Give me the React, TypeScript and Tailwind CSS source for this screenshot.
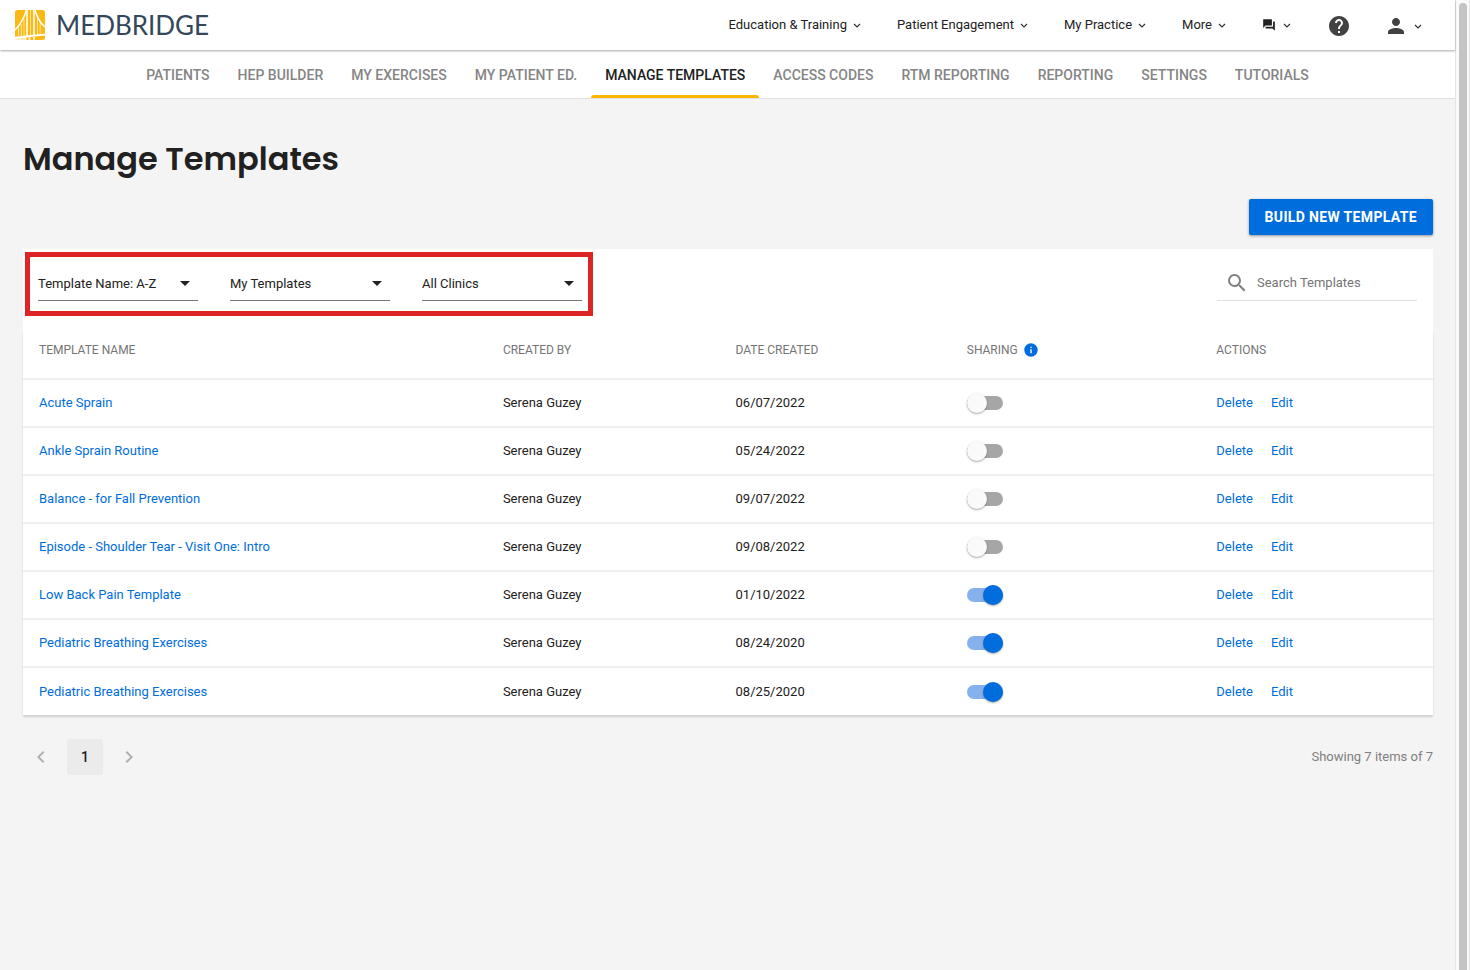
import { useState } from "react";
import {
  MdChevronLeft,
  MdChevronRight,
  MdHelp,
  MdInfo,
  MdPerson,
  MdQuestionAnswer,
  MdSearch,
} from "react-icons/md";

const TOP_LINKS = ["Education & Training", "Patient Engagement", "My Practice", "More"];

const TABS = [
  "Patients",
  "HEP Builder",
  "My Exercises",
  "My Patient Ed.",
  "Manage Templates",
  "Access Codes",
  "RTM Reporting",
  "Reporting",
  "Settings",
  "Tutorials",
];

const FILTERS = [
  { label: "Sort by", options: ["Template Name: A-Z", "Template Name: Z-A"] },
  { label: "Template owner", options: ["My Templates", "Shared Templates"] },
  { label: "Clinic", options: ["All Clinics"] },
];

const TEMPLATES = [
  { id: 1, name: "Acute Sprain", date: "06/07/2022", shared: false },
  { id: 2, name: "Ankle Sprain Routine", date: "05/24/2022", shared: false },
  { id: 3, name: "Balance - for Fall Prevention", date: "09/07/2022", shared: false },
  { id: 4, name: "Episode - Shoulder Tear - Visit One: Intro", date: "09/08/2022", shared: false },
  { id: 5, name: "Low Back Pain Template", date: "01/10/2022", shared: true },
  { id: 6, name: "Pediatric Breathing Exercises", date: "08/24/2020", shared: true },
  { id: 7, name: "Pediatric Breathing Exercises", date: "08/25/2020", shared: true },
];

function Chevron() {
  return (
    <svg viewBox="0 0 8 6" fill="none" className="w-2 h-1.5 mt-0.5">
      <path d="M1 1l3 3 3-3" stroke="#333" strokeWidth="1.2" />
    </svg>
  );
}

function Logo() {
  return (
    <a href="#" aria-label="MedBridge" className="flex items-center gap-[11px]">
      <svg viewBox="0 0 30 30" className="w-[30px] h-[30px]">
        <rect width="30" height="30" rx="2.5" fill="#fdb913" />
        {/* cables */}
        <g stroke="#fff" fill="none">
          <path d="M11.500 0C9 8 5 15 0 20" strokeWidth="1.5" />
          <path d="M20 0c2 7 5 13 10 17" strokeWidth="1.5" />
          <path d="M12 0v26M19 0v25" strokeWidth="1.5" />
          <path
            d="M3.500 17v10M6.300 14v13M9 9v17M15.500 0v25M22.500 7v18M25.200 12v13"
            strokeWidth="0.6"
          />
        </g>
        {/* deck */}
        <path d="M0 26.800Q15 25 30 23.800v1.700Q15 26.500 0 29.500z" fill="#fff" />
        <path d="M0 29.500l11.500-2V30H0zM13.500 27.300h2V30h-2zM18 27h2v3h-2z" fill="#fff" opacity="0.75" />
      </svg>
      <span className="font-['Lato','Liberation_Sans',sans-serif] text-[26px] leading-8 text-[#34475b]">
        MEDBRIDGE
      </span>
    </a>
  );
}

function TopBar() {
  return (
    <header className="relative z-10 flex items-center justify-between h-[50px] pl-[15px] pr-[33px] bg-white shadow-[0_1px_2px_rgba(0,0,0,0.35)]">
      <Logo />
      <nav className="flex items-center gap-9 text-[13px] text-[#212121]">
        {TOP_LINKS.map((link) => (
          <button key={link} className="flex items-center gap-1.5 cursor-pointer">
            {link}
            <Chevron />
          </button>
        ))}
        <button aria-label="Messages" className="flex items-center gap-[7px] cursor-pointer">
          <MdQuestionAnswer className="w-3.5 h-3.5" />
          <Chevron />
        </button>
        <div className="flex items-center gap-[33px] pt-0.5 text-[#424242]">
          <button aria-label="Help" className="cursor-pointer">
            <MdHelp className="w-6 h-6" />
          </button>
          <button aria-label="Account" className="flex items-center gap-1.5 cursor-pointer">
            <MdPerson className="w-6 h-6" />
            <Chevron />
          </button>
        </div>
      </nav>
    </header>
  );
}

function TabBar() {
  return (
    <nav className="flex justify-center h-[49px] bg-white border-b border-[#e0e0e0]">
      {TABS.map((tab) => (
        <a
          key={tab}
          href="#"
          className={`relative px-3.5 pt-4 text-[14px] leading-[18px] font-medium uppercase whitespace-nowrap ${
            tab === "Manage Templates" ? "text-[#212121]" : "text-[#858585]"
          }`}
        >
          {tab}
          {tab === "Manage Templates" && (
            <span className="absolute left-0 right-0 bottom-0 h-[3px] rounded-t-[3px] bg-[#fbb800]" />
          )}
        </a>
      ))}
    </nav>
  );
}

function FilterSelect({ label, options }: { label: string; options: string[] }) {
  return (
    <div className="relative w-40">
      <select
        aria-label={label}
        className="appearance-none w-full h-[34px] pr-6 border-b border-[#757575] bg-transparent text-[13px] text-[#212121] outline-none cursor-pointer"
      >
        {options.map((option) => (
          <option key={option}>{option}</option>
        ))}
      </select>
      <svg
        viewBox="0 0 10 5"
        className="absolute right-2 top-3.5 w-2.5 h-[5px] pointer-events-none"
      >
        <path d="M0 0h10L5 5z" fill="#212121" />
      </svg>
    </div>
  );
}

function ShareToggle({ name, initial }: { name: string; initial: boolean }) {
  const [on, setOn] = useState(initial);

  return (
    <label className="relative flex items-center w-9 h-5 cursor-pointer">
      <input
        type="checkbox"
        aria-label={`Share ${name}`}
        checked={on}
        onChange={() => setOn(!on)}
        className="peer sr-only"
      />
      <span className="w-9 h-3.5 rounded-full bg-[#a6a6a6] peer-checked:bg-[#85b2ec]" />
      <span className="absolute left-0 top-0 w-5 h-5 rounded-full bg-[#fafafa] shadow-[0_1px_2px_rgba(0,0,0,0.35)] transition-transform peer-checked:translate-x-4 peer-checked:bg-[#006ddd]" />
    </label>
  );
}

function TemplatesTable() {
  return (
    <table className="w-full table-fixed text-left text-[13px] text-[#212121] bg-white shadow-[0_2px_2px_rgba(0,0,0,0.15)]">
      <colgroup>
        <col className="w-[32.9%]" />
        <col className="w-[16.5%]" />
        <col className="w-[16.4%]" />
        <col className="w-[17.7%]" />
        <col />
      </colgroup>
      <thead>
        <tr className="h-12 text-[12px] text-[#757575] uppercase">
          <th className="px-4 pb-2.5 font-normal">Template Name</th>
          <th className="px-4 pb-2.5 font-normal">Created By</th>
          <th className="px-4 pb-2.5 font-normal">Date Created</th>
          <th className="px-4 pb-2.5 font-normal">
            <span className="flex items-center gap-[5px]">
              Sharing
              <MdInfo className="w-4 h-4 text-[#006ddd]" />
            </span>
          </th>
          <th className="px-4 pb-2.5 font-normal">Actions</th>
        </tr>
      </thead>
      <tbody>
        {TEMPLATES.map((template) => (
          <tr key={template.id} className="h-12 border-t-2 border-[#f0f0f0]">
            <td className="px-4">
              <a href="#" className="text-[#006ddd]">
                {template.name}
              </a>
            </td>
            <td className="px-4">Serena Guzey</td>
            <td className="px-4">{template.date}</td>
            <td className="px-4">
              <ShareToggle name={template.name} initial={template.shared} />
            </td>
            <td className="px-4">
              <div className="flex gap-[18px] text-[#006ddd]">
                <button className="cursor-pointer">Delete</button>
                <button className="cursor-pointer">Edit</button>
              </div>
            </td>
          </tr>
        ))}
      </tbody>
    </table>
  );
}

function Pagination() {
  return (
    <div className="flex items-center justify-between mt-6">
      <div className="flex gap-2">
        <button aria-label="Previous page" className="flex items-center justify-center w-9 h-9 text-[#b0b0b0]">
          <MdChevronLeft className="w-6 h-6" />
        </button>
        <button className="w-9 h-9 rounded-[3px] bg-[#ebebeb] text-[14px] font-medium text-[#212121]">
          1
        </button>
        <button aria-label="Next page" className="flex items-center justify-center w-9 h-9 text-[#b0b0b0]">
          <MdChevronRight className="w-6 h-6" />
        </button>
      </div>
      <p className="text-[13px] text-[#808080]">Showing 7 items of 7</p>
    </div>
  );
}

export default function App() {
  return (
    <div className="flex min-h-screen bg-[#f4f4f4] font-['Roboto','Liberation_Sans',sans-serif]">
      <div className="flex-1 min-w-0">
        <TopBar />
        <TabBar />

        <main className="pl-[23px] pr-[22px] pt-9">
          <h1 className="font-['Poppins','Inter',sans-serif] text-[32px] leading-12 font-semibold text-[#212121]">
            Manage Templates
          </h1>

          <div className="flex justify-end mt-4">
            <button className="h-9 px-4 rounded-[2px] bg-[#006ddd] text-[14px] font-bold text-white uppercase tracking-wide shadow-[0_1px_3px_rgba(0,0,0,0.4)] cursor-pointer">
              Build New Template
            </button>
          </div>

          <div className="flex items-start justify-between mt-3.5 h-[82px] pt-[3px] pl-0.5 pr-4 bg-white">
            <div className="flex gap-8 pt-2.5 pb-2.5 pl-2 pr-1.5 border-[5px] border-[#de2424]">
              {FILTERS.map((filter) => (
                <FilterSelect key={filter.label} {...filter} />
              ))}
            </div>
            <label className="flex items-center gap-2 w-[200px] mt-3.5 pl-2 h-[35px] border-b border-[#e0e0e0]">
              <MdSearch className="w-6 h-6 shrink-0 text-[#808080]" />
              <input
                type="text"
                aria-label="Search Templates"
                placeholder="Search Templates"
                className="w-full text-[13px] text-[#212121] placeholder:text-[#757575] outline-none"
              />
            </label>
          </div>

          <TemplatesTable />
          <Pagination />
        </main>
      </div>

      {/* scroll track */}
      <div className="flex w-[15px] shrink-0 justify-center pt-[3px] border-x border-[#e6e6e6] bg-[#fafafa]">
        <div className="w-2 rounded-t-full bg-[#c4c4c4]" />
      </div>
    </div>
  );
}
